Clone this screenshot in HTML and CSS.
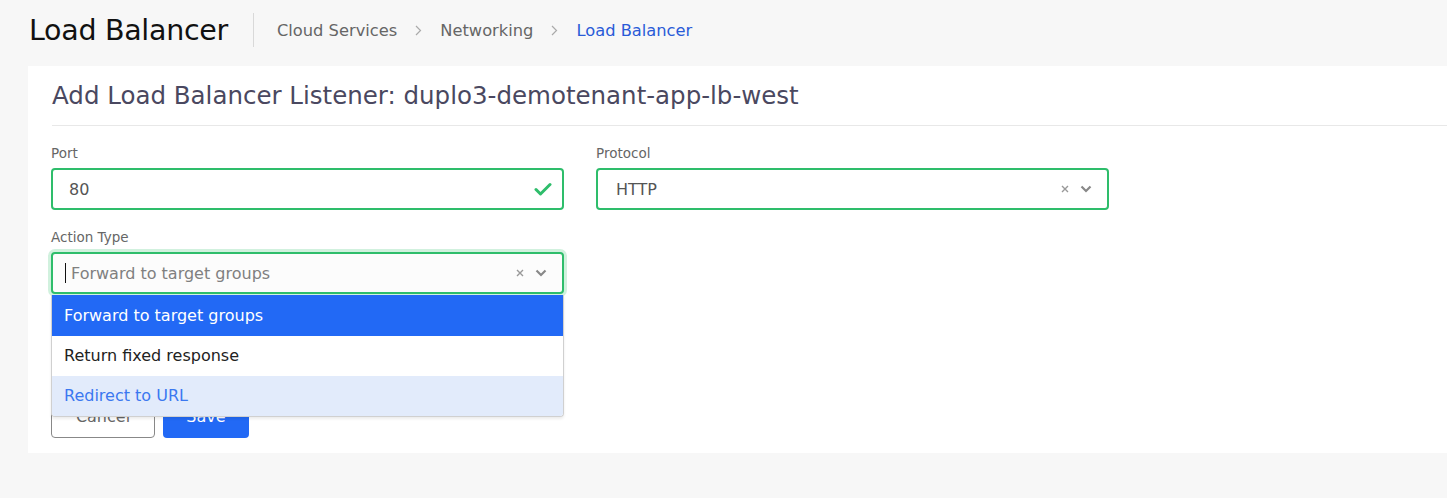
FILE: index.html
```html
<!DOCTYPE html>
<html lang="en">
<head>
<meta charset="utf-8">
<title>Load Balancer</title>
<link rel="stylesheet" href="styles.css">
</head>
<body>
<header class="page-header">
  <h1 class="page-title">Load Balancer</h1>
  <span class="header-divider"></span>
  <nav class="breadcrumb">
    <span class="crumb">Cloud Services</span>
    <svg class="crumb-sep" width="7" height="11" viewBox="0 0 7 11"><path d="M1 1 L5.5 5.5 L1 10" fill="none" stroke="#aaa" stroke-width="1.2"/></svg>
    <span class="crumb">Networking</span>
    <svg class="crumb-sep" width="7" height="11" viewBox="0 0 7 11"><path d="M1 1 L5.5 5.5 L1 10" fill="none" stroke="#aaa" stroke-width="1.2"/></svg>
    <span class="crumb crumb-active">Load Balancer</span>
  </nav>
</header>
<main class="card">
  <h2 class="card-title">Add Load Balancer Listener: duplo3-demotenant-app-lb-west</h2>
  <div class="card-rule"></div>
  <form class="form">
    <div class="row">
      <div class="field">
        <label class="label">Port</label>
        <div class="control valid">
          <span class="value">80</span>
          <svg class="check" width="18" height="14" viewBox="0 0 18 14"><path d="M2 7.5 L6.5 12 L16 2.5" fill="none" stroke="#2ebd6b" stroke-width="3" stroke-linecap="round" stroke-linejoin="round"/></svg>
        </div>
      </div>
      <div class="field">
        <label class="label">Protocol</label>
        <div class="control valid select">
          <span class="value value-indent">HTTP</span>
          <span class="indicators">
            <svg class="clear" width="10" height="10" viewBox="0 0 10 10"><path d="M2 2 L8 8 M8 2 L2 8" stroke="#999" stroke-width="1.4"/></svg>
            <svg class="chev" width="12" height="8" viewBox="0 0 12 8"><path d="M1.5 1.5 L6 6 L10.5 1.5" fill="none" stroke="#888" stroke-width="2.2"/></svg>
          </span>
        </div>
      </div>
    </div>
    <div class="row">
      <div class="field">
        <label class="label">Action Type</label>
        <div class="select-wrap">
          <div class="control valid select focused">
            <span class="caret"></span>
            <span class="placeholder">Forward to target groups</span>
            <span class="indicators">
              <svg class="clear" width="10" height="10" viewBox="0 0 10 10"><path d="M2 2 L8 8 M8 2 L2 8" stroke="#999" stroke-width="1.4"/></svg>
              <svg class="chev" width="12" height="8" viewBox="0 0 12 8"><path d="M1.5 1.5 L6 6 L10.5 1.5" fill="none" stroke="#888" stroke-width="2.2"/></svg>
            </span>
          </div>
          <ul class="menu">
            <li class="option option-selected">Forward to target groups</li>
            <li class="option">Return fixed response</li>
            <li class="option option-focused">Redirect to URL</li>
          </ul>
        </div>
      </div>
    </div>
    <div class="actions">
      <button type="button" class="btn btn-cancel">Cancel</button>
      <button type="button" class="btn btn-save">Save</button>
    </div>
  </form>
</main>
</body>
</html>
```
FILE: styles.css
```css
* { box-sizing: border-box; }
body {
  margin: 0;
  background: #f7f7f7;
  font-family: "DejaVu Sans", "Open Sans", sans-serif;
  color: #333;
}
.page-header {
  display: flex;
  align-items: center;
  height: 60px;
  padding-left: 29px;
}
.page-title {
  margin: 0;
  font-size: 28.5px;
  font-weight: 500;
  color: #111;
  letter-spacing: -0.3px;
}
.header-divider {
  width: 1px;
  height: 34px;
  background: #d9d9d9;
  margin: 0 23px 0 25px;
}
.breadcrumb {
  display: flex;
  align-items: center;
  gap: 18px;
  font-size: 16.3px;
  color: #666;
  padding-top: 1px;
}
.crumb-sep { flex: none; }
.crumb-active { color: #2a5bd7; }
.card {
  margin: 6px 0 0 28px;
  background: #fff;
  padding: 0 0 15px 0;
}
.card-title {
  margin: 0;
  padding: 15px 0 0 24px;
  height: 59px;
  font-size: 24.5px;
  font-weight: 400;
  color: #4a4860;
}
.card-rule {
  height: 1px;
  background: #e8e8e8;
  margin-left: 24px;
}
.form { padding-left: 23px; }
.row {
  display: flex;
  gap: 32px;
  margin-top: 19px;
}
.row + .row { margin-top: 19px; }
.field { width: 513px; }
.label {
  display: block;
  font-size: 13.5px;
  color: #666;
  height: 17px;
  line-height: 17px;
  margin-bottom: 6px;
}
.control {
  height: 42px;
  border-radius: 4px;
  border: 2px solid #ccc;
  display: flex;
  align-items: center;
  padding: 0 16px;
  font-size: 16px;
  background: #fff;
}
.control.valid { border-color: #2ebd6b; }
.value { color: #555; }
.value-indent { padding-left: 2px; }
.check { margin-left: auto; margin-right: -6px; }
.indicators {
  margin-left: auto;
  display: flex;
  align-items: center;
  gap: 10px;
  margin-right: -1px;
}
.select-wrap { position: relative; }
.focused {
  background: #fcfcfc;
  box-shadow: 0 0 0 3px rgba(46, 189, 107, 0.22);
  padding-left: 12px;
}
.caret {
  width: 1px;
  height: 20px;
  background: #111;
  margin-right: 5px;
}
.placeholder { color: #808080; }
.menu {
  position: absolute;
  left: 0;
  right: 0;
  top: 43px;
  margin: 0;
  padding: 0;
  list-style: none;
  background: #fff;
  border: 1px solid #d0d0d0;
  border-top: none;
  border-radius: 0 0 4px 4px;
  box-shadow: 0 2px 3px rgba(0,0,0,0.08);
  z-index: 2;
  overflow: hidden;
}
.option {
  height: 40px;
  line-height: 40px;
  padding-left: 12px;
  font-size: 16px;
  color: #222;
}
.option-selected { background: #2269f5; color: #fff; height: 41px; line-height: 41px; }
.option-focused { background: #e2ebfb; color: #3b78f0; }
.actions {
  display: flex;
  gap: 8px;
  margin-top: 101px;
}
.btn {
  height: 43px;
  border-radius: 4px;
  font-family: inherit;
  font-size: 16px;
}
.btn-cancel {
  width: 104px;
  background: #fff;
  border: 1px solid #888;
  color: #666;
}
.btn-save {
  width: 86px;
  background: #2269f5;
  border: none;
  color: #fff;
}
```
